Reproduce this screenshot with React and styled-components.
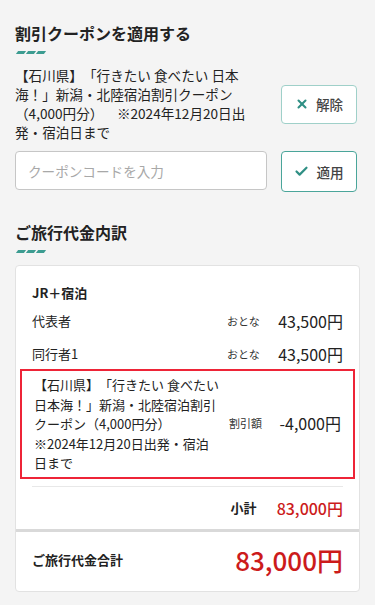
import React from 'react';
import styled, { createGlobalStyle } from 'styled-components';
import { X, Check } from 'lucide-react';

const GlobalStyle = createGlobalStyle`
    * { box-sizing: border-box; }
    body {
        margin: 0;
        background: #f4f4f4;
        font-family: "Noto Sans CJK JP", "Noto Sans", sans-serif;
        color: #222;
        text-spacing-trim: space-all;
    }
`;

const Page = styled.main`
    padding: 21px 15px 15px;
`;

const Heading = styled.h2`
    margin: 0;
    font-size: 16px;
    line-height: 24px;
    font-weight: 700;
    color: #222;
`;

const Dashes = styled.div`
    display: flex;
    gap: 2px;
    margin: 6px 0 ${p => p.$after}px 2px;
    span {
        width: 8px;
        height: 3px;
        background: #3c9c91;
        transform: skewX(-35deg);
    }
`;

const CouponRow = styled.div`
    display: flex;
    align-items: center;
    gap: 16px;
    padding-right: 3px;
`;

const CouponText = styled.p`
    flex: 1;
    margin: 0;
    font-size: 13.6px;
    line-height: 19px;
    color: #222;
`;

const OutlineButton = styled.button`
    flex: none;
    width: 76px;
    height: ${p => p.$h}px;
    display: flex;
    align-items: center;
    justify-content: center;
    gap: 7px;
    background: #fff;
    border: 1px solid ${p => (p.$strong ? '#4aa59a' : '#9fd0c9')};
    border-radius: 4px;
    font-family: inherit;
    font-size: 13.6px;
    font-weight: 500;
    color: #444;
    padding: 0;
    svg { color: #2f8f84; }
`;

const InputRow = styled.div`
    display: flex;
    gap: 14px;
    margin: 9px 0 28px;
    padding-right: 3px;
`;

const CodeInput = styled.input`
    flex: 1;
    min-width: 0;
    height: 39px;
    border: 1px solid #c6c6c6;
    border-radius: 4px;
    background: #fff;
    padding: 0 12px;
    font-family: inherit;
    font-size: 13.6px;
    color: #222;
    &::placeholder { color: #a8a8a8; }
`;

const Card = styled.section`
    background: #fff;
    border: 1px solid #e2e2e2;
    border-radius: 4px;
`;

const CardBody = styled.div`
    padding: 16px 16px 0;
`;

const PlanTitle = styled.div`
    font-size: 13px;
    font-weight: 700;
    line-height: 22px;
    margin-bottom: 5px;
`;

const Rows = styled.div`
    display: flex;
    flex-direction: column;
    gap: 9px;
`;

const Row = styled.div`
    display: grid;
    grid-template-columns: 185px 1fr auto;
    column-gap: 10px;
    align-items: center;
    font-size: 13px;
    line-height: 24px;
`;

const DiscountRow = styled(Row)`
    margin: 3px -12px 0;
    padding: 4px 12px;
    border: 2px solid #ee2437;
    line-height: 19.5px;
`;

const Kind = styled.span`
    font-size: 11px;
    color: #333;
`;

const Amount = styled.span`
    text-align: right;
    font-size: 16px;
    white-space: nowrap;
`;

const Subtotal = styled.div`
    display: flex;
    justify-content: flex-end;
    align-items: center;
    gap: 20px;
    margin-top: 7px;
    padding: 9px 0;
    border-top: 1px solid #e8e8e8;
    line-height: 24px;
`;

const SubLabel = styled.span`
    font-size: 13px;
    font-weight: 700;
`;

const RedPrice = styled.span`
    color: #cc1b1b;
    font-size: ${p => p.$size}px;
    font-weight: 500;
    white-space: nowrap;
`;

const Total = styled.div`
    display: flex;
    justify-content: space-between;
    align-items: center;
    border-top: 3px solid #d9d9d9;
    padding: 10px 16px 13px;
    line-height: 36px;
`;

const TotalLabel = styled.span`
    font-size: 13px;
    font-weight: 700;
`;

const Dash = ({ after }) => (
    <Dashes $after={after}><span /><span /><span /></Dashes>
);

export default function App() {
    const travellers = [
        { name: '代表者', kind: 'おとな', price: '43,500円' },
        { name: '同行者1', kind: 'おとな', price: '43,500円' },
    ];

    return (
        <>
            <GlobalStyle />
            <Page lang="ja">
                <Heading>割引クーポンを適用する</Heading>
                <Dash after={12} />
                <CouponRow>
                    <CouponText>
                        【石川県】「行きたい 食べたい 日本海！」新潟・北陸宿泊割引クーポン（4,000円分）　※2024年12月20日出発・宿泊日まで
                    </CouponText>
                    <OutlineButton $h={39}>
                        <X size={14} strokeWidth={3.5} />解除
                    </OutlineButton>
                </CouponRow>
                <InputRow>
                    <CodeInput placeholder="クーポンコードを入力" />
                    <OutlineButton $h={41} $strong>
                        <Check size={15} strokeWidth={3.5} />適用
                    </OutlineButton>
                </InputRow>

                <Heading>ご旅行代金内訳</Heading>
                <Dash after={12} />
                <Card>
                    <CardBody>
                        <PlanTitle>JR＋宿泊</PlanTitle>
                        <Rows>
                            {travellers.map(t => (
                                <Row key={t.name}>
                                    <span>{t.name}</span>
                                    <Kind>{t.kind}</Kind>
                                    <Amount>{t.price}</Amount>
                                </Row>
                            ))}
                        </Rows>
                        <DiscountRow>
                            <span>【石川県】「行きたい 食べたい 日本海！」新潟・北陸宿泊割引クーポン（4,000円分）　※2024年12月20日出発・宿泊日まで</span>
                            <Kind>割引額</Kind>
                            <Amount>-4,000円</Amount>
                        </DiscountRow>
                        <Subtotal>
                            <SubLabel>小計</SubLabel>
                            <RedPrice $size={16}>83,000円</RedPrice>
                        </Subtotal>
                    </CardBody>
                    <Total>
                        <TotalLabel>ご旅行代金合計</TotalLabel>
                        <RedPrice $size={26}>83,000円</RedPrice>
                    </Total>
                </Card>
            </Page>
        </>
    );
}
